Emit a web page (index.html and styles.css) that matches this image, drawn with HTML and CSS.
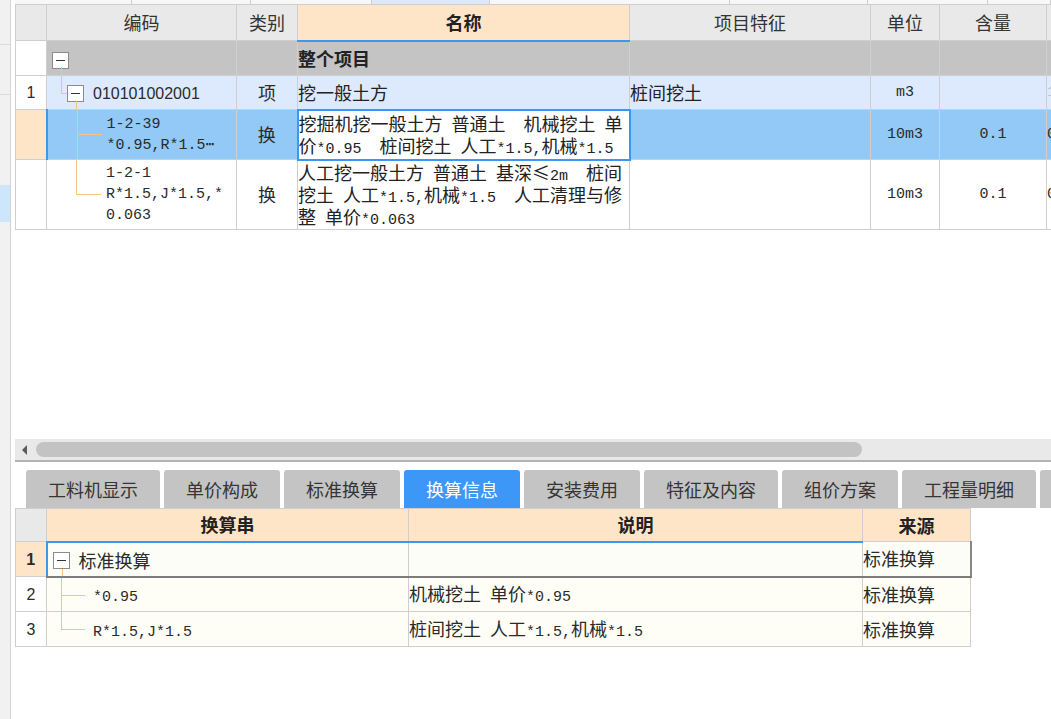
FILE: index.html
```html
<!DOCTYPE html>
<html lang="zh-CN">
<head>
<meta charset="utf-8">
<title>换算信息</title>
<link rel="stylesheet" href="styles.css">
</head>
<body>
<div class="app">
  <aside class="side">
    <div class="side-a"></div>
    <div class="side-b"></div>
    <div class="side-c"></div>
    <div class="side-sel"></div>
  </aside>
  <main class="main">
    <div class="topstrip">
      <span></span><span></span><span></span><span class="on"></span><span></span><span></span><span></span><span></span>
    </div>
    <div class="upper">
      <table class="grid up">
        <colgroup>
          <col class="c-no"><col class="c-code"><col class="c-type"><col class="c-name"><col class="c-feat"><col class="c-unit"><col class="c-qty"><col class="c-more">
        </colgroup>
        <thead>
          <tr class="h">
            <th></th><th>编码</th><th>类别</th><th class="th-name">名称</th><th>项目特征</th><th>单位</th><th>含量</th><th></th>
          </tr>
        </thead>
        <tbody>
          <tr class="r-all">
            <td class="no"></td>
            <td class="code"><span class="box b0"></span><span class="tl v a1"></span></td>
            <td></td>
            <td class="name bold">整个项目</td>
            <td></td><td></td><td></td><td></td>
          </tr>
          <tr class="r-item">
            <td class="no">1</td>
            <td class="code"><span class="tl v a2"></span><span class="tl h a3"></span><span class="box b1"></span><span class="num">010101002001</span><span class="tl v a4"></span></td>
            <td class="ctr">项</td>
            <td class="name">挖一般土方</td>
            <td class="name">桩间挖土</td>
            <td class="ctr m">m3</td>
            <td></td>
            <td class="more m faint">1</td>
          </tr>
          <tr class="r-sel">
            <td class="no"></td>
            <td class="code sub"><span class="tl v s1"></span><span class="tl h s2"></span>1-2-39<br>*0.95,R*1.5⋯</td>
            <td class="ctr">换</td>
            <td class="name focus">挖掘机挖一般土方<span class="m"> </span>普通土<span class="m">  </span>机械挖土<span class="m"> </span>单<br>价<span class="m">*0.95  </span>桩间挖土<span class="m"> </span>人工<span class="m">*1.5,</span>机械<span class="m">*1.5</span></td>
            <td></td>
            <td class="ctr m">10m3</td>
            <td class="ctr m">0.1</td>
            <td class="more m">0</td>
          </tr>
          <tr class="r-sub">
            <td class="no"></td>
            <td class="code sub"><span class="tl v u1"></span><span class="tl h u2"></span>1-2-1<br>R*1.5,J*1.5,*<br>0.063</td>
            <td class="ctr">换</td>
            <td class="name">人工挖一般土方<span class="m"> </span>普通土<span class="m"> </span>基深≤<span class="m">2m  </span>桩间<br>挖土<span class="m"> </span>人工<span class="m">*1.5,</span>机械<span class="m">*1.5  </span>人工清理与修<br>整<span class="m"> </span>单价<span class="m">*0.063</span></td>
            <td></td>
            <td class="ctr m">10m3</td>
            <td class="ctr m">0.1</td>
            <td class="more m">0</td>
          </tr>
        </tbody>
      </table>
    </div>
    <div class="hscroll"><span class="arrow"></span><span class="thumb"></span></div>
    <div class="tabs">
      <div class="tab">工料机显示</div>
      <div class="tab">单价构成</div>
      <div class="tab">标准换算</div>
      <div class="tab on">换算信息</div>
      <div class="tab">安装费用</div>
      <div class="tab">特征及内容</div>
      <div class="tab">组价方案</div>
      <div class="tab">工程量明细</div>
      <div class="tab">其他</div>
    </div>
    <div class="lower">
      <table class="grid low">
        <colgroup>
          <col class="c-no"><col class="c-str"><col class="c-desc"><col class="c-src">
        </colgroup>
        <thead>
          <tr class="h"><th class="no"></th><th>换算串</th><th>说明</th><th>来源</th></tr>
        </thead>
        <tbody>
          <tr class="r1">
            <td class="no">1</td>
            <td class="k tree"><span class="box b0"></span><span class="lbl">标准换算</span><span class="tl v l1"></span></td>
            <td class="desc"></td>
            <td class="src">标准换算</td>
          </tr>
          <tr>
            <td class="no">2</td>
            <td class="tree leaf"><span class="tl v l2"></span><span class="tl h l3"></span><span class="m">*0.95</span></td>
            <td class="desc">机械挖土<span class="m"> </span>单价<span class="m">*0.95</span></td>
            <td class="src">标准换算</td>
          </tr>
          <tr>
            <td class="no">3</td>
            <td class="tree leaf"><span class="tl v l4"></span><span class="tl h l3"></span><span class="m">R*1.5,J*1.5</span></td>
            <td class="desc">桩间挖土<span class="m"> </span>人工<span class="m">*1.5,</span>机械<span class="m">*1.5</span></td>
            <td class="src">标准换算</td>
          </tr>
        </tbody>
      </table>
    </div>
  </main>
</div>
</body>
</html>
```

FILE: styles.css
```css
* { box-sizing: border-box; }
html, body { margin: 0; padding: 0; }
body {
  width: 1051px;
  height: 719px;
  overflow: hidden;
  background: #fff;
  font-family: "Noto Sans CJK SC", "Noto Sans", sans-serif;
  font-size: 18px;
  color: #2b2b2b;
}
.app { display: flex; height: 719px; }

/* left strip */
.side {
  width: 11px;
  flex: none;
  background: #f1f1f1;
  border-right: 1px solid #d5d5d5;
  display: flex;
  flex-direction: column;
}
.side-a { height: 45px; border-bottom: 1px solid #dcdcdc; }
.side-b { height: 50px; border-bottom: 1px solid #dcdcdc; }
.side-c { height: 90px; }
.side-sel { height: 37px; background: #cde6fb; }

.main {
  flex: 1;
  min-width: 0;
  padding-left: 4px;
  display: flex;
  flex-direction: column;
  overflow: hidden;
}

.topstrip {
  height: 4px;
  flex: none;
  display: grid;
  grid-template-columns: 117px 119px 121px 118px 240px 138px 120px 1fr;
}
.topstrip span { background: #f7f7f7; border-right: 1px solid #cdcdcd; }
.topstrip .on { background: #dde9fb; }

.upper { height: 435px; flex: none; overflow: hidden; }

/* grids */
.grid { border-collapse: collapse; table-layout: fixed; }
.grid th, .grid td {
  border: 1px solid #cfcfcf;
  padding: 0;
  line-height: 21px;
  white-space: nowrap;
  overflow: hidden;
  vertical-align: middle;
}
.grid th { font-weight: normal; color: #333; }
.m {
  font-family: "Liberation Mono", "DejaVu Sans Mono", monospace;
  font-size: 15px;
  white-space: pre;
  line-height: 15px;
}
td.m { line-height: 21px; }
.bold { font-weight: bold; }
.ctr { text-align: center; }
.no {
  text-align: center;
  font-family: "Liberation Sans", "Noto Sans", sans-serif;
  font-size: 16px;
}
.faint { color: #b8c4d4; }

.up { width: 1131px; }
.up .c-no { width: 31px; }
.up .c-code { width: 190px; }
.up .c-type { width: 61px; }
.up .c-name { width: 332px; }
.up .c-feat { width: 241px; }
.up .c-unit { width: 69px; }
.up .c-qty { width: 107px; }
.up .c-more { width: 100px; }

.up .h th { height: 36px; background: #e9e9e9; }
.up .h .th-name {
  background: #fee5c8;
  font-weight: bold;
  color: #222;
  border-bottom: 2px solid #3c96f4;
}

.r-all td { height: 35px; background: #c4c4c4; }
.r-item td { height: 34px; background: #dde9fc; }
.r-sel td { height: 50px; background: #92c9f6; }
.r-sub td { height: 70px; background: #fff; }
.r-all .no, .r-item .no, .r-sub .no { background: #fff; }
.r-sel .no { background: #fee5c8; }
.r-sel .code { border-left: 2px solid #3c96f4; }
.r-sel .focus { background: #fff; border: 2px solid #3c96f4; }

.name { padding-left: 3px; color: #222; }
.more { padding-left: 2px; }

/* tree */
.code, .tree { position: relative; }
.code.sub {
  padding-left: 59px;
  font-family: "Liberation Mono", "DejaVu Sans Mono", monospace;
  font-size: 15px;
  line-height: 21px;
}
.tl { position: absolute; background: #f7c47f; }
.tl.v { width: 1px; }
.tl.h { height: 1px; }
.box {
  display: inline-block;
  width: 17px;
  height: 17px;
  border: 1px solid #8c8c8c;
  background: #fff;
  vertical-align: middle;
  position: relative;
}
.box::after {
  content: "";
  position: absolute;
  left: 3px;
  right: 3px;
  top: 7px;
  height: 1px;
  background: #333;
}
.b0 { margin-left: 5px; }
.b1 { margin-left: 20px; }
.num {
  font-family: "Liberation Sans", "Noto Sans", sans-serif;
  font-size: 16px;
  margin-left: 9px;
  vertical-align: middle;
}
.a1 { left: 14px; top: 26px; bottom: 0; }
.a2 { left: 14px; top: 0; height: 17px; }
.a3 { left: 14px; top: 17px; width: 6px; }
.a4 { left: 29px; top: 25px; bottom: 0; }
.s1 { left: 29px; top: 0; bottom: 0; }
.s2 { left: 29px; top: 24px; width: 25px; }
.u1 { left: 29px; top: 0; height: 34px; }
.u2 { left: 29px; top: 34px; width: 25px; }

/* horizontal scrollbar */
.hscroll {
  height: 23px;
  flex: none;
  background: #e9e9e9;
  border-bottom: 2px solid #b3b3b3;
  display: flex;
  align-items: center;
  padding-left: 7px;
}
.arrow {
  width: 0;
  height: 0;
  border-right: 5px solid #5c5c5c;
  border-top: 5px solid transparent;
  border-bottom: 5px solid transparent;
}
.thumb {
  margin-left: 9px;
  width: 826px;
  height: 15px;
  border-radius: 8px;
  background: #c3c3c3;
}

/* tabs */
.tabs {
  flex: none;
  height: 46px;
  display: flex;
  gap: 4px;
  padding: 8px 0 0 11px;
  overflow: hidden;
}
.tab {
  flex: none;
  height: 38px;
  padding: 0 22px;
  background: #c4c4c4;
  border-radius: 3px 3px 0 0;
  color: #353535;
  display: flex;
  align-items: center;
  line-height: 1;
}
.tab.on { background: #3d97f6; color: #fff; }

/* lower grid */
.lower { flex: 1; overflow: hidden; }
.low { width: 955px; }
.low .c-no { width: 31px; }
.low .c-str { width: 362px; }
.low .c-desc { width: 454px; }
.low .c-src { width: 108px; }
.low .h th { height: 33px; background: #fee5c8; font-weight: bold; color: #222; }
.low .h th.no { background: #e9e9e9; }
.low td { height: 35px; background: #fffef6; }
.low td.no { background: #fff; }
.low .r1 td { background: #fdfdf8; border-bottom: 2px solid #7c7c7c; }
.low .r1 td.no { background: #fee5c8; font-weight: bold; border-bottom: 1px solid #cfcfcf; }
.low .r1 .k { border-top: 2px solid #3c96f4; border-left: 2px solid #3c96f4; }
.low .r1 .desc { border-top: 2px solid #3c96f4; }
.low .r1 .src { border-right: 2px solid #888; }
.lbl { margin-left: 9px; vertical-align: middle; }
.desc, .src { padding-left: 3px; }
.tree.leaf { padding-left: 46px; }
.l1 { left: 14px; top: 26px; bottom: 0; }
.l2 { left: 14px; top: 0; bottom: 0; }
.l3 { left: 14px; top: 17px; width: 24px; }
.l4 { left: 14px; top: 0; height: 17px; }
```
